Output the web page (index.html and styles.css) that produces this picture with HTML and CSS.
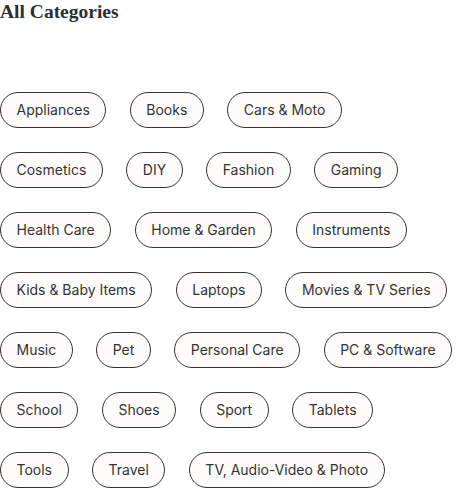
FILE: index.html
```html
<!DOCTYPE html>
<html>
<head>
<meta charset="utf-8">
<link rel="stylesheet" href="styles.css">
</head>
<body>
<section class="cats">
  <h2 class="title">All Categories</h2>
  <ul class="list">
    <li class="pill">Appliances</li>
    <li class="pill">Books</li>
    <li class="pill">Cars &amp; Moto</li>
    <li class="pill">Cosmetics</li>
    <li class="pill">DIY</li>
    <li class="pill">Fashion</li>
    <li class="pill">Gaming</li>
    <li class="pill">Health Care</li>
    <li class="pill">Home &amp; Garden</li>
    <li class="pill">Instruments</li>
    <li class="pill">Kids &amp; Baby Items</li>
    <li class="pill">Laptops</li>
    <li class="pill">Movies &amp; TV Series</li>
    <li class="pill">Music</li>
    <li class="pill">Pet</li>
    <li class="pill">Personal Care</li>
    <li class="pill">PC &amp; Software</li>
    <li class="pill">School</li>
    <li class="pill">Shoes</li>
    <li class="pill">Sport</li>
    <li class="pill">Tablets</li>
    <li class="pill">Tools</li>
    <li class="pill">Travel</li>
    <li class="pill">TV, Audio-Video &amp; Photo</li>
  </ul>
</section>
</body>
</html>
```
FILE: styles.css
```css
html, body {
  margin: 0;
  padding: 0;
  background: #ffffff;
}
.cats {
  width: 456px;
}
.title {
  margin: 0;
  font-family: "Liberation Serif", "DejaVu Serif", serif;
  font-weight: 700;
  font-size: 19.5px;
  line-height: 24px;
  color: #2e2e2e;
}
.list {
  list-style: none;
  margin: 68px 0 0 0;
  padding: 0;
  display: flex;
  flex-wrap: wrap;
  column-gap: 23.5px;
  row-gap: 24px;
}
.pill {
  box-sizing: border-box;
  height: 36px;
  padding: 0 15.5px;
  border: 1px solid #333333;
  border-radius: 18px;
  background: #fdfcfa;
  font-family: Inter, "Noto Sans", sans-serif;
  font-size: 14px;
  line-height: 34px;
  color: #333333;
  white-space: nowrap;
}
```
